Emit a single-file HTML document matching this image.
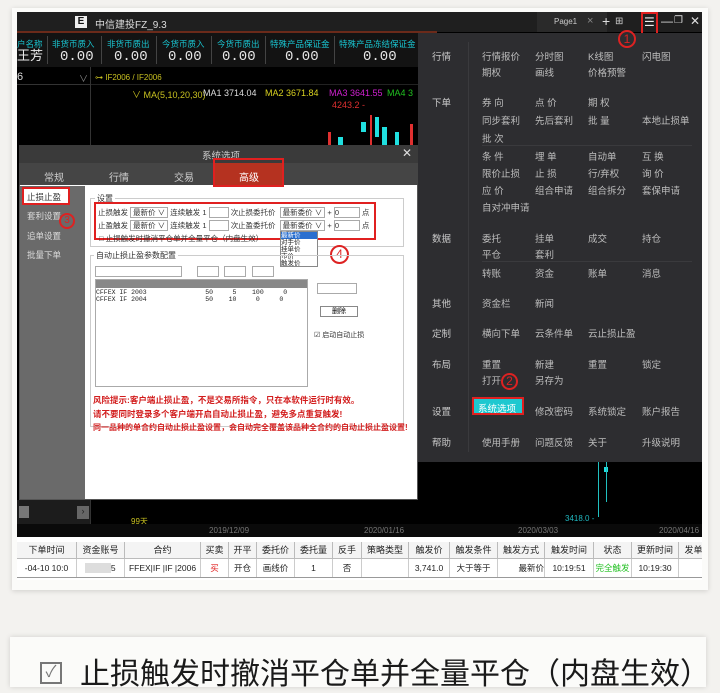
<!DOCTYPE html>
<html><head><meta charset="utf-8"><style>
*{margin:0;padding:0;box-sizing:border-box}
body{width:720px;height:678px;background:#f3f2ef;position:relative;overflow:hidden;font-family:"Liberation Sans","Noto Sans CJK SC",sans-serif;font-size:9px}
.a{position:absolute;white-space:nowrap}
.card{position:absolute;left:12px;top:8px;width:696px;height:582px;background:#fbfbf9;box-shadow:0 1px 5px rgba(0,0,0,.15)}
.w{position:absolute;left:17px;top:12px;width:685px;height:568px;background:#000;overflow:hidden}
.lbl{color:#19c4d0;font-size:8.5px}
.num{color:#e6e6e6;font-size:14px;font-family:"Liberation Mono",monospace}
.m{color:#bdbdbd;font-size:9.5px}
.mc{color:#c8c8c8;font-size:9.5px}
.th{position:absolute;top:0;height:16px;border-right:1px solid #bbb;text-align:center;line-height:16px;font-size:9px;color:#222}
.td{position:absolute;top:0;height:18px;border-right:1px solid #ccc;text-align:center;line-height:18px;font-size:8.5px;color:#222}
.inp{position:absolute;height:11px;background:#fff;border:1px solid #aaa}
.red{color:#d21c1c;font-size:8.5px;font-weight:bold}
.circ{position:absolute;border:2px solid #d22;border-radius:50%;color:#d22;text-align:center;font-size:12px}
</style></head><body>
<div class="card"></div>
<div class="w">
 <div class="a" style="left:0;top:0;width:685px;height:20px;background:#1f1f1f"></div>
 <div class="a" style="left:0;top:19px;width:420px;height:2px;background:#6b2a1a"></div>
 <div class="a" style="left:58px;top:4px;width:12px;height:12px;background:#eee;color:#111;font-weight:bold;font-size:10px;text-align:center;line-height:12px">E</div>
 <div class="a" style="left:78px;top:4px;color:#ddd;font-size:10px">中信建投FZ_9.3</div>
 <div class="a" style="left:520px;top:0;width:70px;height:20px;background:#2a2a2a"></div>
 <div class="a" style="left:537px;top:5px;color:#ccc;font-size:8px">Page1</div>
 <div class="a" style="left:570px;top:3px;color:#888;font-size:11px">×</div>
 <div class="a" style="left:585px;top:1px;color:#ddd;font-size:14px">+</div>
 <div class="a" style="left:598px;top:4px;color:#ccc;font-size:10px">⊞</div>
 <div class="a" style="left:627px;top:3px;color:#eee;font-size:12px">☰</div>
 <div class="a" style="left:624px;top:0;width:17px;height:28px;border:2px solid #e02020"></div>
 <div class="a" style="left:644px;top:2px;color:#ddd;font-size:12px">—</div>
 <div class="a" style="left:657px;top:3px;color:#ddd;font-size:10px">❐</div>
 <div class="a" style="left:673px;top:2px;color:#ddd;font-size:12px">✕</div>
 <div class="a" style="left:0;top:21px;width:685px;height:34px;background:#131313"></div>
 <div class="a lbl" style="left:0;top:26px">户名称</div><div class="a" style="left:0;top:37px;color:#eee;font-size:13px;line-height:14px">王芳</div>
 <div class="a lbl" style="left:35px;top:26px">非货币质入</div><div class="a num" style="left:43px;top:37px">0.00</div>
 <div class="a lbl" style="left:90px;top:26px">非货币质出</div><div class="a num" style="left:97px;top:37px">0.00</div>
 <div class="a lbl" style="left:145px;top:26px">今货币质入</div><div class="a num" style="left:151px;top:37px">0.00</div>
 <div class="a lbl" style="left:200px;top:26px">今货币质出</div><div class="a num" style="left:205px;top:37px">0.00</div>
 <div class="a lbl" style="left:253px;top:26px">特殊产品保证金</div><div class="a num" style="left:268px;top:37px">0.00</div>
 <div class="a lbl" style="left:322px;top:26px">特殊产品冻结保证金</div><div class="a num" style="left:346px;top:37px">0.00</div>
 <div class="a" style="left:30px;top:24px;width:1px;height:28px;background:#444"></div>
 <div class="a" style="left:84px;top:24px;width:1px;height:28px;background:#444"></div>
 <div class="a" style="left:139px;top:24px;width:1px;height:28px;background:#444"></div>
 <div class="a" style="left:194px;top:24px;width:1px;height:28px;background:#444"></div>
 <div class="a" style="left:248px;top:24px;width:1px;height:28px;background:#444"></div>
 <div class="a" style="left:317px;top:24px;width:1px;height:28px;background:#444"></div>
 <div class="a" style="left:73px;top:55px;width:1px;height:470px;background:#333"></div>
 <div class="a" style="left:0;top:72px;width:73px;height:1px;background:#333"></div>
 <div class="a" style="left:74px;top:72px;width:611px;height:1px;background:#222"></div>
 <div class="a" style="left:0;top:59px;color:#ddd;font-size:11px">6</div>
 <div class="a" style="left:62px;top:60px;color:#888">∨</div>
 <div class="a" style="left:78px;top:61px;color:#c8c020;font-size:8px">⊶ IF2006 / IF2006</div>
 <div class="a" style="left:115px;top:76px;color:#c8c020;font-size:9px">∨ MA(5,10,20,30)</div>
 <div class="a" style="left:186px;top:76px;color:#ddd;font-size:9px">MA1 3714.04</div>
 <div class="a" style="left:248px;top:76px;color:#d8d020;font-size:9px">MA2 3671.84</div>
 <div class="a" style="left:312px;top:76px;color:#d020d0;font-size:9px">MA3 3641.55</div>
 <div class="a" style="left:370px;top:76px;color:#20c020;font-size:9px">MA4 3</div>
 <div class="a" style="left:315px;top:88px;color:#e03030;font-size:9px">4243.2 -</div>
 <div class="a" style="left:311px;top:120px;width:3px;height:18px;background:#e03030"></div>
 <div class="a" style="left:321px;top:125px;width:5px;height:12px;background:#20e0e0"></div>
 <div class="a" style="left:344px;top:110px;width:5px;height:10px;background:#20e0e0"></div>
 <div class="a" style="left:353px;top:103px;width:2px;height:30px;background:#e03030"></div>
 <div class="a" style="left:358px;top:105px;width:4px;height:20px;background:#20e0e0"></div>
 <div class="a" style="left:365px;top:115px;width:5px;height:20px;background:#20e0e0"></div>
 <div class="a" style="left:378px;top:120px;width:4px;height:18px;background:#20e0e0"></div>
 <div class="a" style="left:393px;top:112px;width:3px;height:24px;background:#e03030"></div>
 <div class="a" style="left:581px;top:440px;width:1px;height:65px;background:#20c0c0"></div>
 <div class="a" style="left:587px;top:455px;width:4px;height:5px;background:#20e0e0"></div>
 <div class="a" style="left:589px;top:450px;width:1px;height:40px;background:#20c0c0"></div>
 <div class="a" style="left:548px;top:502px;color:#20b8c0;font-size:8px">3418.0 -</div>
 <div class="a" style="left:114px;top:504px;color:#c8c020;font-size:8px">99天</div>
 <div class="a" style="left:0;top:488px;width:73px;height:37px;background:#1c1c1c"></div>
 <div class="a" style="left:2px;top:494px;width:10px;height:12px;background:#777"></div>
 <div class="a" style="left:60px;top:494px;width:12px;height:13px;background:#666;color:#222;text-align:center">›</div>
 <div class="a" style="left:0;top:512px;width:685px;height:13px;background:#0a0a0a"></div>
 <div class="a" style="left:192px;top:514px;color:#777;font-size:8px">2019/12/09</div>
 <div class="a" style="left:347px;top:514px;color:#777;font-size:8px">2020/01/16</div>
 <div class="a" style="left:501px;top:514px;color:#777;font-size:8px">2020/03/03</div>
 <div class="a" style="left:642px;top:514px;color:#777;font-size:8px">2020/04/16</div>
 <div class="a" style="left:0;top:525px;width:685px;height:43px;background:#fff"></div>
 <div class="a" style="left:0;top:530px;width:685px;height:17px;background:#f4f4f4;border-bottom:1px solid #bbb">
  <div class="th" style="left:0;width:60px">下单时间</div><div class="th" style="left:60px;width:48px">资金账号</div><div class="th" style="left:108px;width:76px">合约</div><div class="th" style="left:184px;width:28px">买卖</div><div class="th" style="left:212px;width:28px">开平</div><div class="th" style="left:240px;width:38px">委托价</div><div class="th" style="left:278px;width:38px">委托量</div><div class="th" style="left:316px;width:29px">反手</div><div class="th" style="left:345px;width:47px">策略类型</div><div class="th" style="left:392px;width:41px">触发价</div><div class="th" style="left:433px;width:48px">触发条件</div><div class="th" style="left:481px;width:47px">触发方式</div><div class="th" style="left:528px;width:49px">触发时间</div><div class="th" style="left:577px;width:38px">状态</div><div class="th" style="left:615px;width:47px">更新时间</div><div class="th" style="left:662px;width:30px">发单</div>
 </div>
 <div class="a" style="left:0;top:547px;width:685px;height:19px;border-bottom:1px solid #999">
  <div class="td" style="left:0;width:60px">-04-10 10:0</div><div class="td" style="left:60px;width:48px"><span style="background:#ddd;color:#ddd">xxxxxx</span>5</div><div class="td" style="left:108px;width:76px">FFEX|IF |IF |2006</div><div class="td" style="left:184px;width:28px;color:#e02020">买</div><div class="td" style="left:212px;width:28px">开仓</div><div class="td" style="left:240px;width:38px">画线价</div><div class="td" style="left:278px;width:38px">1</div><div class="td" style="left:316px;width:29px">否</div><div class="td" style="left:345px;width:47px"></div><div class="td" style="left:392px;width:41px">3,741.0</div><div class="td" style="left:433px;width:48px">大于等于</div><div class="td" style="left:481px;width:47px;text-align:right">最新价</div><div class="td" style="left:528px;width:49px">10:19:51</div><div class="td" style="left:577px;width:38px;color:#20c020">完全触发</div><div class="td" style="left:615px;width:47px">10:19:30</div>
 </div>
 <div class="a" style="left:401px;top:21px;width:284px;height:429px;background:#2d2d30"></div>
 <div class="a" style="left:451px;top:30px;width:1px;height:410px;background:#3a3a3d"></div>
 <div class="a mc" style="left:415px;top:37px">行情</div>
 <div class="a m" style="left:465px;top:37px">行情报价</div><div class="a m" style="left:518px;top:37px">分时图</div><div class="a m" style="left:571px;top:37px">K线图</div><div class="a m" style="left:625px;top:37px">闪电图</div>
 <div class="a m" style="left:465px;top:53px">期权</div><div class="a m" style="left:518px;top:53px">画线</div><div class="a m" style="left:571px;top:53px">价格预警</div>
 <div class="a mc" style="left:415px;top:83px">下单</div>
 <div class="a m" style="left:465px;top:83px">券 向</div><div class="a m" style="left:518px;top:83px">点 价</div><div class="a m" style="left:571px;top:83px">期 权</div>
 <div class="a m" style="left:465px;top:101px">同步套利</div><div class="a m" style="left:518px;top:101px">先后套利</div><div class="a m" style="left:571px;top:101px">批 量</div><div class="a m" style="left:625px;top:101px">本地止损单</div>
 <div class="a m" style="left:465px;top:119px">批 次</div>
 <div class="a" style="left:465px;top:133px;width:210px;height:1px;background:#3a3a3d"></div>
 <div class="a m" style="left:465px;top:137px">条 件</div><div class="a m" style="left:518px;top:137px">埋 单</div><div class="a m" style="left:571px;top:137px">自动单</div><div class="a m" style="left:625px;top:137px">互 换</div>
 <div class="a m" style="left:465px;top:154px">限价止损</div><div class="a m" style="left:518px;top:154px">止 损</div><div class="a m" style="left:571px;top:154px">行/弃权</div><div class="a m" style="left:625px;top:154px">询 价</div>
 <div class="a m" style="left:465px;top:171px">应 价</div><div class="a m" style="left:518px;top:171px">组合申请</div><div class="a m" style="left:571px;top:171px">组合拆分</div><div class="a m" style="left:625px;top:171px">套保申请</div>
 <div class="a m" style="left:465px;top:188px">自对冲申请</div>
 <div class="a mc" style="left:415px;top:219px">数据</div>
 <div class="a m" style="left:465px;top:219px">委托</div><div class="a m" style="left:518px;top:219px">挂单</div><div class="a m" style="left:571px;top:219px">成交</div><div class="a m" style="left:625px;top:219px">持仓</div>
 <div class="a m" style="left:465px;top:235px">平仓</div><div class="a m" style="left:518px;top:235px">套利</div>
 <div class="a" style="left:465px;top:249px;width:210px;height:1px;background:#3a3a3d"></div>
 <div class="a m" style="left:465px;top:254px">转账</div><div class="a m" style="left:518px;top:254px">资金</div><div class="a m" style="left:571px;top:254px">账单</div><div class="a m" style="left:625px;top:254px">消息</div>
 <div class="a mc" style="left:415px;top:284px">其他</div>
 <div class="a m" style="left:465px;top:284px">资金栏</div><div class="a m" style="left:518px;top:284px">新闻</div>
 <div class="a mc" style="left:415px;top:314px">定制</div>
 <div class="a m" style="left:465px;top:314px">横向下单</div><div class="a m" style="left:518px;top:314px">云条件单</div><div class="a m" style="left:571px;top:314px">云止损止盈</div>
 <div class="a mc" style="left:415px;top:345px">布局</div>
 <div class="a m" style="left:465px;top:345px">重置</div><div class="a m" style="left:518px;top:345px">新建</div><div class="a m" style="left:571px;top:345px">重置</div><div class="a m" style="left:625px;top:345px">锁定</div>
 <div class="a m" style="left:465px;top:361px">打开</div><div class="a m" style="left:518px;top:361px">另存为</div>
 <div class="circ" style="left:484px;top:361px;width:17px;height:17px;line-height:13px">2</div>
 <div class="a mc" style="left:415px;top:392px">设置</div>
 <div class="a" style="left:455px;top:385px;width:52px;height:18px;border:2px solid #e02020;background:#1ec8d0"></div>
 <div class="a" style="left:461px;top:389px;color:#fff;font-size:9.5px">系统选项</div>
 <div class="a m" style="left:518px;top:392px">修改密码</div><div class="a m" style="left:571px;top:392px">系统锁定</div><div class="a m" style="left:625px;top:392px">账户报告</div>
 <div class="a mc" style="left:415px;top:423px">帮助</div>
 <div class="a m" style="left:465px;top:423px">使用手册</div><div class="a m" style="left:518px;top:423px">问题反馈</div><div class="a m" style="left:571px;top:423px">关于</div><div class="a m" style="left:625px;top:423px">升级说明</div>
 <div class="circ" style="left:601px;top:18px;width:18px;height:18px;line-height:14px;background:#2d2d30">1</div>
 <div class="a" style="left:2px;top:133px;width:399px;height:355px;background:#fff;border:1px solid #555"></div>
 <div class="a" style="left:2px;top:133px;width:399px;height:18px;background:#3a3a3a"></div>
 <div class="a" style="left:185px;top:136px;color:#ccc;font-size:9.5px">系统选项</div>
 <div class="a" style="left:385px;top:134px;color:#ddd;font-size:12px">✕</div>
 <div class="a" style="left:2px;top:151px;width:399px;height:22px;background:#454545"></div>
 <div class="a" style="left:27px;top:157px;color:#ccc;font-size:10px">常规</div>
 <div class="a" style="left:92px;top:157px;color:#ccc;font-size:10px">行情</div>
 <div class="a" style="left:157px;top:157px;color:#ccc;font-size:10px">交易</div>
 <div class="a" style="left:198px;top:151px;width:68px;height:22px;background:#b53220"></div>
 <div class="a" style="left:222px;top:157px;color:#fff;font-size:10px">高级</div>
 <div class="a" style="left:196px;top:146px;width:71px;height:29px;border:2px solid #e02020"></div>
 <div class="a" style="left:3px;top:174px;width:65px;height:313px;background:#6a6a6a"></div>
 <div class="a" style="left:5px;top:175px;width:48px;height:18px;background:#fff;border:2px solid #e02020"></div>
 <div class="a" style="left:10px;top:179px;color:#333;font-size:8.5px">止损止盈</div>
 <div class="a" style="left:10px;top:198px;color:#ddd;font-size:8.5px">套利设置</div>
 <div class="a" style="left:10px;top:218px;color:#ddd;font-size:8.5px">追单设置</div>
 <div class="a" style="left:10px;top:237px;color:#ddd;font-size:8.5px">批量下单</div>
 <div class="circ" style="left:42px;top:201px;width:16px;height:16px;line-height:12px;font-size:10px">3</div>
 <div class="a" style="left:73px;top:186px;width:314px;height:49px;border:1px solid #ccc"></div>
 <div class="a" style="left:78px;top:181px;background:#fff;color:#333;font-size:8px;padding:0 2px">设置</div>
 <div class="a" style="left:77px;top:190px;width:282px;height:38px;border:2px solid #e02020"></div>
 <div class="a" style="left:81px;top:195px;color:#333;font-size:7.5px">止损触发 <span style="border:1px solid #aaa;padding:0 2px">最新价 ∨</span> 连续触发 1 <span style="border:1px solid #aaa;width:20px;display:inline-block">&nbsp;</span> 次</div>
 <div class="a" style="left:81px;top:208px;color:#333;font-size:7.5px">止盈触发 <span style="border:1px solid #aaa;padding:0 2px">最新价 ∨</span> 连续触发 1 <span style="border:1px solid #aaa;width:20px;display:inline-block">&nbsp;</span> 次</div>
 <div class="a" style="left:221px;top:195px;color:#333;font-size:7.5px">止损委托价 &nbsp;<span style="border:1px solid #aaa;padding:0 2px">最新委价 ∨</span> + <span style="border:1px solid #aaa;width:26px;display:inline-block">0</span> 点</div>
 <div class="a" style="left:221px;top:208px;color:#333;font-size:7.5px">止盈委托价 &nbsp;<span style="border:1px solid #aaa;padding:0 2px">最新委价 ∨</span> + <span style="border:1px solid #aaa;width:26px;display:inline-block">0</span> 点</div>
 <div class="a" style="left:82px;top:221px;color:#333;font-size:7.5px">□ 止损触发时撤消平仓单并全量平仓（内盘生效）</div>
 <div class="a" style="left:263px;top:219px;width:38px;height:36px;background:#fff;border:1px solid #888;font-size:6.5px;line-height:7px;color:#222">
  <div style="background:#2a6fd0;color:#fff">最新价</div><div>对手价</div><div>挂单价</div><div>市价</div><div>触发价</div></div>
 <div class="circ" style="left:313px;top:233px;width:19px;height:19px;line-height:15px">4</div>
 <div class="a" style="left:73px;top:243px;width:314px;height:172px;border:1px solid #ccc"></div>
 <div class="a" style="left:77px;top:238px;background:#fff;color:#333;font-size:8px;padding:0 2px">自动止损止盈参数配置</div>
 <div class="inp" style="left:78px;top:254px;width:87px"></div>
 <div class="inp" style="left:180px;top:254px;width:22px"></div>
 <div class="inp" style="left:207px;top:254px;width:22px"></div>
 <div class="inp" style="left:235px;top:254px;width:22px"></div>
 <div class="a" style="left:78px;top:267px;width:213px;height:108px;border:1px solid #aaa;background:#fff"></div>
 <div class="a" style="left:79px;top:268px;width:211px;height:8px;background:#888"></div>
 <div class="a" style="left:79px;top:277px;color:#222;font-size:6.5px;line-height:7px;font-family:'Liberation Mono',monospace">CFFEX IF 2003 &nbsp; &nbsp; &nbsp; &nbsp; &nbsp; &nbsp; &nbsp; 50 &nbsp; &nbsp; 5 &nbsp; &nbsp;100 &nbsp; &nbsp; 0<br>CFFEX IF 2004 &nbsp; &nbsp; &nbsp; &nbsp; &nbsp; &nbsp; &nbsp; 50 &nbsp; &nbsp;10 &nbsp; &nbsp; 0 &nbsp; &nbsp; 0</div>
 <div class="a" style="left:300px;top:271px;width:40px;height:11px;border:1px solid #aaa"></div>
 <div class="a" style="left:303px;top:294px;width:38px;height:11px;border:1px solid #888;text-align:center;font-size:7px;line-height:10px">删除</div>
 <div class="a" style="left:297px;top:318px;color:#333;font-size:7px">☑ 启动自动止损</div>
 <div class="a red" style="left:76px;top:382px">风险提示:客户端止损止盈，不是交易所指令，只在本软件运行时有效。</div>
 <div class="a red" style="left:76px;top:396px">请不要同时登录多个客户端开启自动止损止盈，避免多点重复触发!</div>
 <div class="a red" style="left:76px;top:410px;font-size:8px">同一品种的单合约自动止损止盈设置，会自动完全覆盖该品种全合约的自动止损止盈设置!</div>
</div>
<div class="a" style="left:10px;top:637px;width:696px;height:50px;background:#fbfbf9;box-shadow:0 0 5px rgba(0,0,0,.15)"></div>
<div class="a" style="left:40px;top:662px;width:22px;height:22px;border:2px solid #777;color:#777;font-size:16px;line-height:18px;text-align:center">✓</div>
<div class="a" style="left:80px;top:657px;color:#1a1a1a;font-size:30px;line-height:36px">止损触发时撤消平仓单并全量平仓（内盘生效）</div>
</body></html>
